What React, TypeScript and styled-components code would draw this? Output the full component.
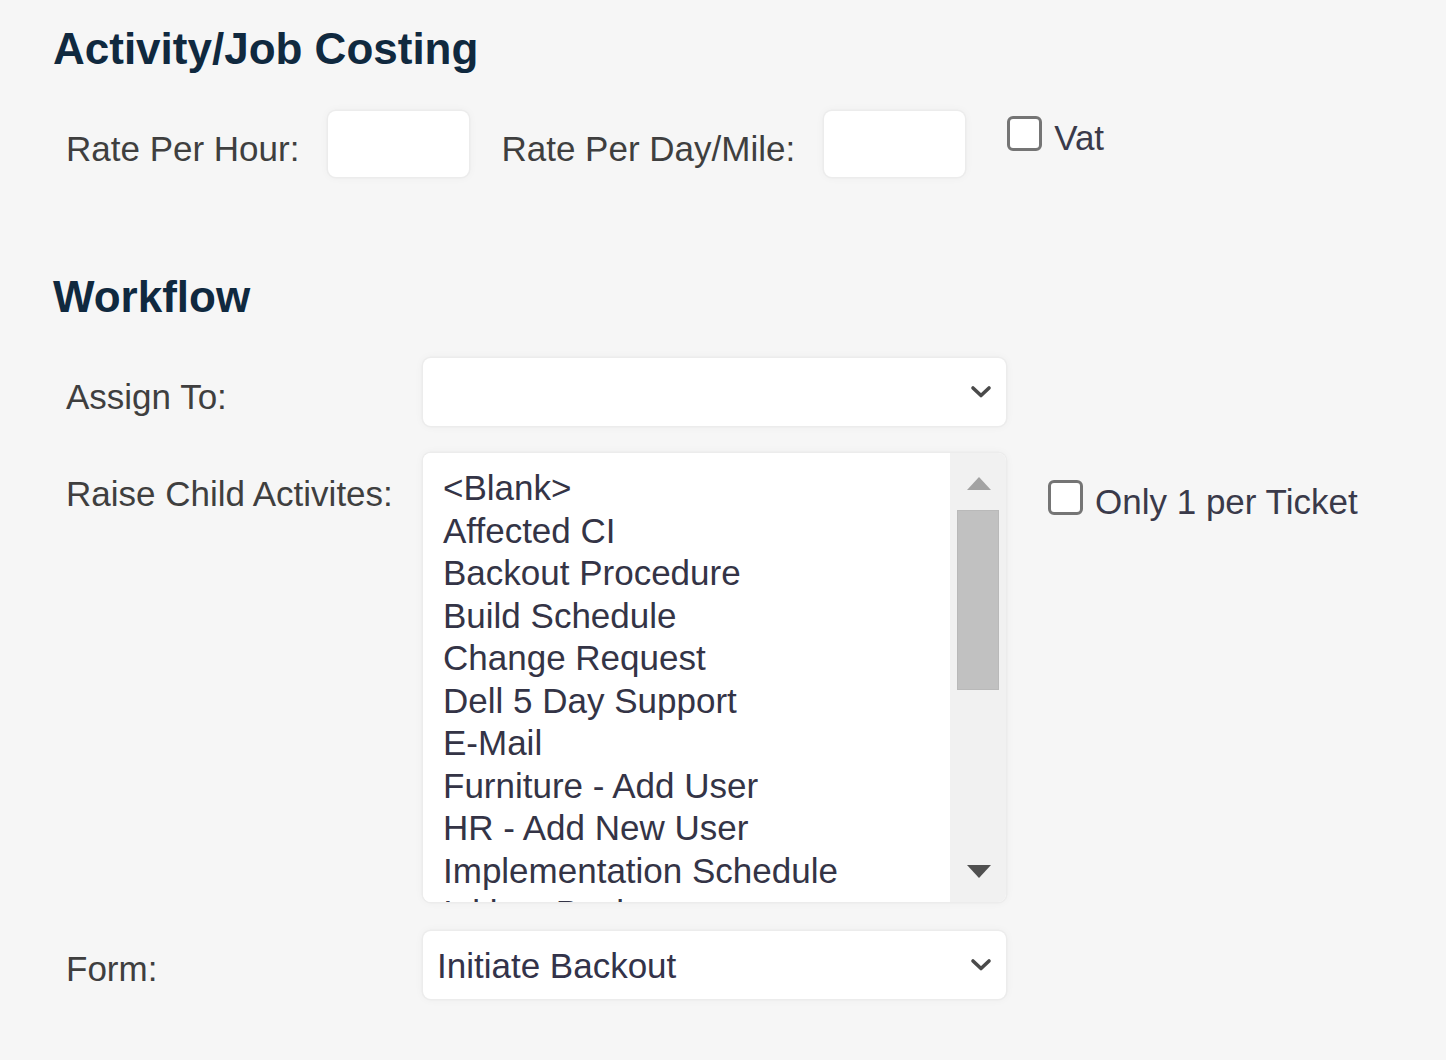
import React from "react";
import styled, { createGlobalStyle } from "styled-components";

const Global = createGlobalStyle`
  html, body { margin: 0; padding: 0; background: #f6f6f6; }
  body { font-family: "Liberation Sans", Arial, sans-serif; }
  * { box-sizing: border-box; }
`;

const Page = styled.div`
  min-height: 1060px;
  padding: 24px 0 0 53px;
  background: #f6f6f6;
  color: #3d3d3d;
`;

const SectionTitle = styled.h2<{ $top?: number }>`
  margin: ${(p) => p.$top ?? 0}px 0 0 0;
  font-size: 44px;
  line-height: 50px;
  font-weight: 700;
  color: #10293f;
`;

const CostingRow = styled.div`
  display: flex;
  align-items: center;
  margin-top: 37px;
  padding-left: 13px;
`;

const Label = styled.span<{ $gap?: number }>`
  font-size: 35px;
  line-height: 42px;
  padding-top: 9px;
  color: #3f3f3f;
  white-space: nowrap;
  margin-right: ${(p) => p.$gap ?? 0}px;
`;

const TopLabel = styled.span`
  font-size: 35px;
  line-height: 42px;
  color: #3f3f3f;
  white-space: nowrap;
  align-self: start;
  margin-top: 20px;
`;

const fieldShadow = `
  box-shadow: 0 0 0 1.5px #ececec, 0 0 10px rgba(0, 0, 0, 0.05);
`;

const NumberBox = styled.div<{ $gap?: number }>`
  width: 141px;
  height: 66px;
  background: #fff;
  border-radius: 8px;
  ${fieldShadow}
  margin-right: ${(p) => p.$gap ?? 0}px;
`;

const CheckGroup = styled.label<{ $top: number }>`
  display: flex;
  align-items: flex-start;
  align-self: flex-start;
  margin-top: ${(p) => p.$top}px;
`;

const Box = styled.span`
  width: 35px;
  height: 35px;
  border: 3px solid #757575;
  border-radius: 6px;
  background: #fff;
  flex: none;
`;

const CheckText = styled.span`
  margin: 5px 0 0 12px;
  font-size: 35px;
  line-height: 34px;
  color: #3a3a4a;
  white-space: nowrap;
`;

const FormGrid = styled.div`
  display: grid;
  grid-template-columns: 357px 583px auto;
  grid-template-rows: 68px 449px 69px;
  row-gap: 27px;
  margin-top: 36px;
  padding-left: 13px;
  align-items: center;
  & > :nth-child(n + 7) { margin-top: 2px; }
`;

const Select = styled.div`
  height: 68px;
  background: #fff;
  border-radius: 8px;
  ${fieldShadow}
  display: flex;
  align-items: center;
  justify-content: space-between;
  padding: 0 14px 0 14px;
  font-size: 35px;
  color: #33334a;
`;

const SelectValue = styled.span`
  line-height: 42px;
  padding-top: 2px;
`;

const Chevron = () => (
  <svg width="22" height="14" viewBox="0 0 22 14">
    <path d="M3 3 L11 10.5 L19 3" fill="none" stroke="#4a4a4a" strokeWidth="3.6" strokeLinecap="round" strokeLinejoin="round" />
  </svg>
);

const ListBox = styled.div`
  align-self: stretch;
  display: flex;
  border-radius: 8px;
  ${fieldShadow}
  overflow: hidden;
  background: #fff;
`;

const Options = styled.ul`
  flex: 1;
  margin: 0;
  padding: 14px 0 0 20px;
  list-style: none;
  overflow: hidden;
  background: #fff;
`;

const Option = styled.li`
  font-size: 35px;
  line-height: 42.5px;
  color: #343446;
  white-space: nowrap;
`;

const Track = styled.div`
  width: 56px;
  flex: none;
  background: #f1f1f1;
  display: flex;
  flex-direction: column;
  align-items: center;
  padding: 24px 0 24px 0;
`;

const Arrow = styled.span<{ $down?: boolean }>`
  width: 0;
  height: 0;
  border-left: 12px solid transparent;
  border-right: 12px solid transparent;
  ${(p) =>
    p.$down
      ? "border-top: 13px solid #505050;"
      : "border-bottom: 13px solid #a3a3a3;"}
  margin-left: 1px;
`;

const Thumb = styled.div`
  width: 42px;
  height: 180px;
  margin-top: 20px;
  background: #c1c1c1;
  border: 1px solid #b9b9b9;
`;

const Spacer = styled.div`
  flex: 1;
`;

const SideCheck = styled.div`
  align-self: start;
  margin: 27px 0 0 42px;
`;

const items = [
  "<Blank>",
  "Affected CI",
  "Backout Procedure",
  "Build Schedule",
  "Change Request",
  "Dell 5 Day Support",
  "E-Mail",
  "Furniture - Add User",
  "HR - Add New User",
  "Implementation Schedule",
  "Initiate Backout",
];

export default function App() {
  return (
    <>
      <Global />
      <Page>
        <SectionTitle>Activity/Job Costing</SectionTitle>
        <CostingRow>
          <Label $gap={29}>Rate Per Hour:</Label>
          <NumberBox $gap={32} />
          <Label $gap={29}>Rate Per Day/Mile:</Label>
          <NumberBox $gap={42} />
          <CheckGroup $top={5}>
            <Box />
            <CheckText>Vat</CheckText>
          </CheckGroup>
        </CostingRow>

        <SectionTitle $top={95}>Workflow</SectionTitle>
        <FormGrid>
          <Label>Assign To:</Label>
          <Select>
            <SelectValue />
            <Chevron />
          </Select>
          <div />

          <TopLabel>Raise Child Activites:</TopLabel>
          <ListBox>
            <Options>
              {items.map((it) => (
                <Option key={it}>{it}</Option>
              ))}
            </Options>
            <Track>
              <Arrow />
              <Thumb />
              <Spacer />
              <Arrow $down />
            </Track>
          </ListBox>
          <SideCheck>
            <CheckGroup $top={0}>
              <Box />
              <CheckText>Only 1 per Ticket</CheckText>
            </CheckGroup>
          </SideCheck>

          <Label>Form:</Label>
          <Select>
            <SelectValue>Initiate Backout</SelectValue>
            <Chevron />
          </Select>
          <div />
        </FormGrid>
      </Page>
    </>
  );
}
